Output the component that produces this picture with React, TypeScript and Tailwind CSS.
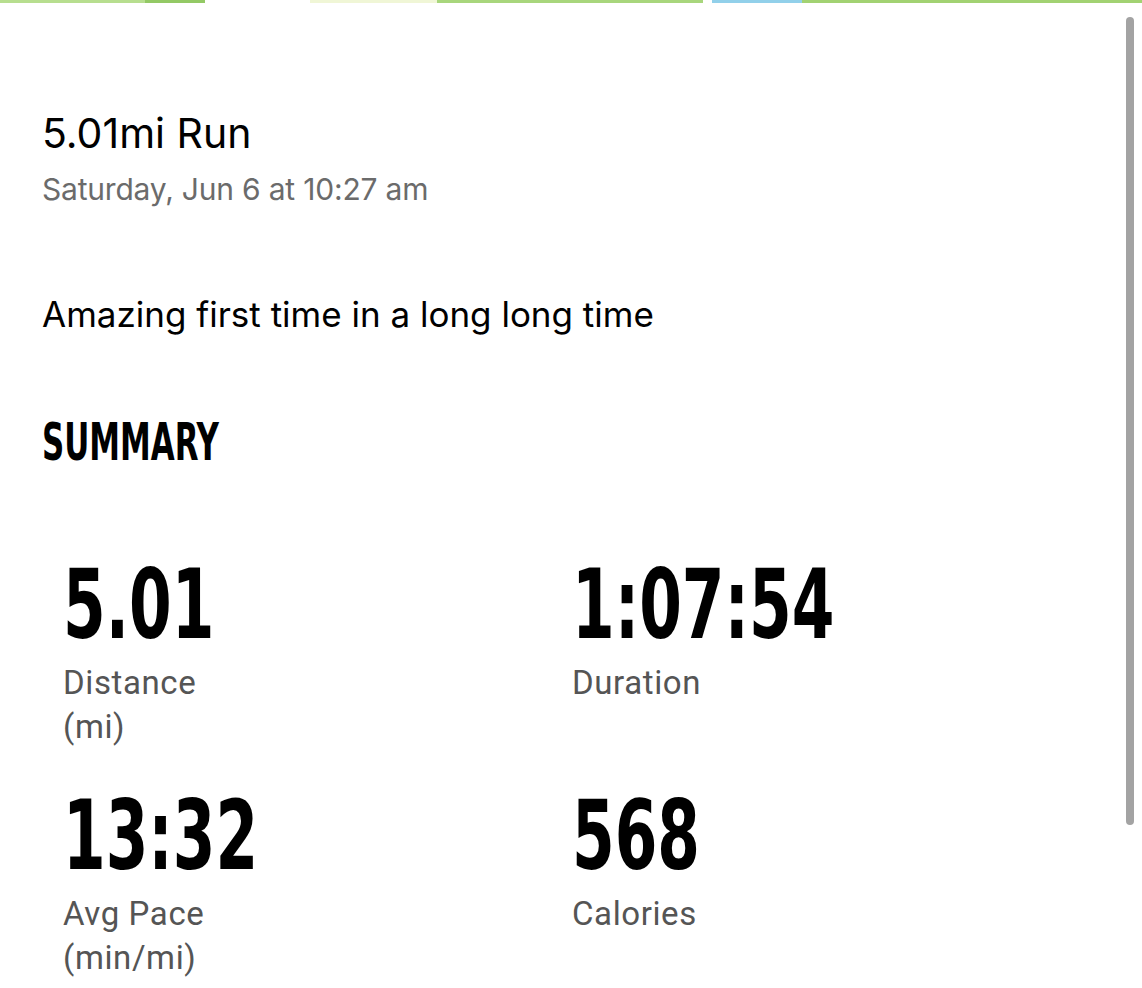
import React from 'react';

const stats = [
  { value: '5.01', label: 'Distance (mi)' },
  { value: '1:07:54', label: 'Duration' },
  { value: '13:32', label: 'Avg Pace (min/mi)' },
  { value: '568', label: 'Calories' },
];

const numFont = { fontFamily: '"Liberation Sans Narrow", "DejaVu Sans Condensed", "DejaVu Sans", sans-serif' };

export default function App() {
  return (
    <div className="relative min-h-[988px] w-full overflow-hidden bg-white" style={{ fontFamily: 'Inter, "Noto Sans", sans-serif' }}>
      {/* progress strip along the top edge */}
      <div className="flex h-[3px] w-full">
        <div className="w-[145px] bg-[#b7de8f]" />
        <div className="w-[60px] bg-[#93c965]" />
        <div className="w-[105px] bg-white" />
        <div className="w-[127px] bg-[#f0f6d6]" />
        <div className="w-[266px] bg-[#a8d67c]" />
        <div className="w-[9px] bg-white" />
        <div className="w-[90px] bg-[#92d0ea]" />
        <div className="flex-1 bg-[#a2d272]" />
      </div>

      {/* scroll thumb */}
      <div className="absolute right-[8px] top-[17px] h-[808px] w-[8px] rounded-full bg-[#a3a3a3]" />

      <div className="pl-[42px] pt-[106px]">
        <h1 className="text-[41px] leading-[48px] text-black">5.01mi Run</h1>
        <p className="mt-[14px] text-[30px] leading-[36px] tracking-[-0.2px] text-[#6b6b6b]">Saturday, Jun 6 at 10:27 am</p>

        <p className="mt-[86px] text-[35px] leading-[42px] text-black">Amazing first time in a long long time</p>

        <h2 className="mt-[79px] h-[56px] text-[52px] font-bold uppercase leading-[56px] text-black">
          <span className="inline-block origin-left scale-x-[0.66]" style={numFont}>Summary</span>
        </h2>

        <div className="mt-[85px] grid grid-cols-[509px_1fr] gap-y-[37px] pl-[21px]">
          {stats.map(s => (
            <div key={s.label}>
              <p className="h-[96px] text-[96px] font-bold leading-[96px] text-black">
                <span className="inline-block origin-left scale-x-[0.71]" style={numFont}>{s.value}</span>
              </p>
              <p className="mt-[10px] max-w-[185px] text-[33px] leading-[44px] tracking-[0.6px] text-[#555555]" style={{ fontFamily: 'Roboto, sans-serif' }}>
                {s.label}
              </p>
            </div>
          ))}
        </div>
      </div>
    </div>
  );
}
